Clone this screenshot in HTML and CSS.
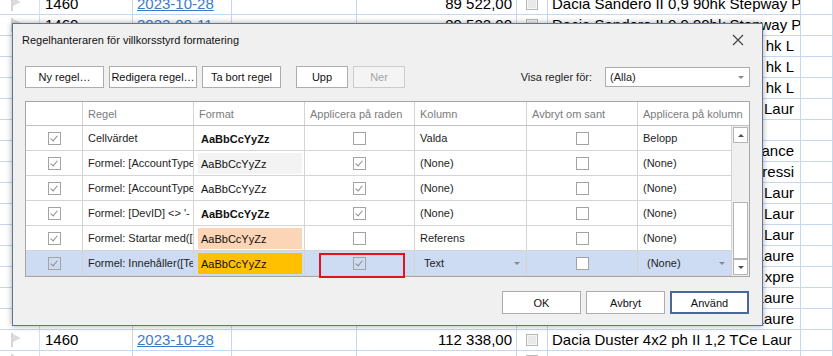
FILE: index.html
```html
<!DOCTYPE html>
<html lang="sv">
<head>
    <meta charset="UTF-8">
    <meta name="viewport" content="width=device-width, initial-scale=1.0">
    <title>Villkorsstyrd formatering</title>
    <link rel="stylesheet" href="styles.css">
</head>
<body>
    <!-- spreadsheet behind the dialog -->
    <div class="sheet">
        <div class="srow">
            <div class="c gut"><span class="flag"></span></div>
            <div class="c ca">1460</div>
            <div class="c cb"><a href="#">2023-10-28</a></div>
            <div class="c cc"></div>
            <div class="c cd">89 522,00</div>
            <div class="c ce"><span class="xbox"></span></div>
            <div class="c cf">Dacia Sandero II 0,9 90hk Stepway P</div>
            <div class="c cg"></div>
        </div>
        <div class="srow">
            <div class="c gut"><span class="flag"></span></div>
            <div class="c ca">1460</div>
            <div class="c cb"><a href="#">2023-09-11</a></div>
            <div class="c cc"></div>
            <div class="c cd">89 522,00</div>
            <div class="c ce"><span class="xbox"></span></div>
            <div class="c cf">Dacia Sandero II 0,9 90hk Stepway P</div>
            <div class="c cg"></div>
        </div>
        <!-- rows under the dialog: only the end of the model name shows -->
        <div class="srow"><div class="c gut"></div><div class="c ca"></div><div class="c cb"></div><div class="c cc"></div><div class="c cd"></div><div class="c ce"></div><div class="c cf tail">hk L</div><div class="c cg"></div></div>
        <div class="srow"><div class="c gut"></div><div class="c ca"></div><div class="c cb"></div><div class="c cc"></div><div class="c cd"></div><div class="c ce"></div><div class="c cf tail">hk L</div><div class="c cg"></div></div>
        <div class="srow"><div class="c gut"></div><div class="c ca"></div><div class="c cb"></div><div class="c cc"></div><div class="c cd"></div><div class="c ce"></div><div class="c cf tail">hk L</div><div class="c cg"></div></div>
        <div class="srow"><div class="c gut"></div><div class="c ca"></div><div class="c cb"></div><div class="c cc"></div><div class="c cd"></div><div class="c ce"></div><div class="c cf tail">Laur</div><div class="c cg"></div></div>
        <div class="srow"><div class="c gut"></div><div class="c ca"></div><div class="c cb"></div><div class="c cc"></div><div class="c cd"></div><div class="c ce"></div><div class="c cf tail"></div><div class="c cg"></div></div>
        <div class="srow"><div class="c gut"></div><div class="c ca"></div><div class="c cb"></div><div class="c cc"></div><div class="c cd"></div><div class="c ce"></div><div class="c cf tail">ance</div><div class="c cg"></div></div>
        <div class="srow"><div class="c gut"></div><div class="c ca"></div><div class="c cb"></div><div class="c cc"></div><div class="c cd"></div><div class="c ce"></div><div class="c cf tail">pressi</div><div class="c cg"></div></div>
        <div class="srow"><div class="c gut"></div><div class="c ca"></div><div class="c cb"></div><div class="c cc"></div><div class="c cd"></div><div class="c ce"></div><div class="c cf tail">Laur</div><div class="c cg"></div></div>
        <div class="srow"><div class="c gut"></div><div class="c ca"></div><div class="c cb"></div><div class="c cc"></div><div class="c cd"></div><div class="c ce"></div><div class="c cf tail">Laur</div><div class="c cg"></div></div>
        <div class="srow"><div class="c gut"></div><div class="c ca"></div><div class="c cb"></div><div class="c cc"></div><div class="c cd"></div><div class="c ce"></div><div class="c cf tail">Laur</div><div class="c cg"></div></div>
        <div class="srow"><div class="c gut"></div><div class="c ca"></div><div class="c cb"></div><div class="c cc"></div><div class="c cd"></div><div class="c ce"></div><div class="c cf tail">Laure</div><div class="c cg"></div></div>
        <div class="srow"><div class="c gut"></div><div class="c ca"></div><div class="c cb"></div><div class="c cc"></div><div class="c cd"></div><div class="c ce"></div><div class="c cf tail">xpre</div><div class="c cg"></div></div>
        <div class="srow"><div class="c gut"></div><div class="c ca"></div><div class="c cb"></div><div class="c cc"></div><div class="c cd"></div><div class="c ce"></div><div class="c cf tail">Laure</div><div class="c cg"></div></div>
        <div class="srow"><div class="c gut"></div><div class="c ca"></div><div class="c cb"></div><div class="c cc"></div><div class="c cd"></div><div class="c ce"></div><div class="c cf tail">Laure</div><div class="c cg"></div></div>
        <div class="srow">
            <div class="c gut"><span class="flag"></span></div>
            <div class="c ca">1460</div>
            <div class="c cb"><a href="#">2023-10-28</a></div>
            <div class="c cc"></div>
            <div class="c cd">112 338,00</div>
            <div class="c ce"><span class="xbox"></span></div>
            <div class="c cf">Dacia Duster 4x2 ph II 1,2 TCe Laur</div>
            <div class="c cg"></div>
        </div>
        <div class="srow">
            <div class="c gut"><span class="flag"></span></div>
            <div class="c ca"></div>
            <div class="c cb"></div>
            <div class="c cc"></div>
            <div class="c cd"></div>
            <div class="c ce"><span class="xbox"></span></div>
            <div class="c cf"></div>
            <div class="c cg"></div>
        </div>
    </div>

    <!-- the dialog window -->
    <div class="dialog">
        <div class="titlebar">
            <span>Regelhanteraren för villkorsstyrd formatering</span>
            <svg class="close" width="12" height="12" viewBox="0 0 12 12">
                <path d="M1 1 L11 11 M11 1 L1 11" stroke="#444" stroke-width="1.2" fill="none"/>
            </svg>
        </div>

        <div class="toolbar">
            <button class="btn">Ny regel…</button>
            <button class="btn wide">Redigera regel…</button>
            <button class="btn">Ta bort regel</button>
            <button class="btn small gap">Upp</button>
            <button class="btn small" disabled>Ner</button>
            <div class="showfor">
                <span>Visa regler för:</span>
                <div class="select">(Alla)<span class="arrow"></span></div>
            </div>
        </div>

        <div class="grid">
            <div class="ghead">
                <div class="gh"></div>
                <div class="gh">Regel</div>
                <div class="gh">Format</div>
                <div class="gh">Applicera på raden</div>
                <div class="gh">Kolumn</div>
                <div class="gh">Avbryt om sant</div>
                <div class="gh">Applicera på kolumn</div>
            </div>
            <div class="gbody">
                <div class="grows">
                    <div class="grow">
                        <div class="gc mid"><span class="chk on"></span></div>
                        <div class="gc">Cellvärdet</div>
                        <div class="gc fmt"><span class="swatch bold">AaBbCcYyZz</span></div>
                        <div class="gc mid"><span class="chk"></span></div>
                        <div class="gc">Valda</div>
                        <div class="gc mid"><span class="chk"></span></div>
                        <div class="gc">Belopp</div>
                    </div>
                    <div class="grow">
                        <div class="gc mid"><span class="chk on"></span></div>
                        <div class="gc">Formel: [AccountType</div>
                        <div class="gc fmt"><span class="swatch grey">AaBbCcYyZz</span></div>
                        <div class="gc mid"><span class="chk on"></span></div>
                        <div class="gc">(None)</div>
                        <div class="gc mid"><span class="chk"></span></div>
                        <div class="gc">(None)</div>
                    </div>
                    <div class="grow">
                        <div class="gc mid"><span class="chk on"></span></div>
                        <div class="gc">Formel: [AccountType</div>
                        <div class="gc fmt"><span class="swatch">AaBbCcYyZz</span></div>
                        <div class="gc mid"><span class="chk on"></span></div>
                        <div class="gc">(None)</div>
                        <div class="gc mid"><span class="chk"></span></div>
                        <div class="gc">(None)</div>
                    </div>
                    <div class="grow">
                        <div class="gc mid"><span class="chk on"></span></div>
                        <div class="gc">Formel: [DevID] &lt;&gt; '-</div>
                        <div class="gc fmt"><span class="swatch bold">AaBbCcYyZz</span></div>
                        <div class="gc mid"><span class="chk on"></span></div>
                        <div class="gc">(None)</div>
                        <div class="gc mid"><span class="chk"></span></div>
                        <div class="gc">(None)</div>
                    </div>
                    <div class="grow">
                        <div class="gc mid"><span class="chk on"></span></div>
                        <div class="gc">Formel: Startar med([</div>
                        <div class="gc fmt"><span class="swatch peach">AaBbCcYyZz</span></div>
                        <div class="gc mid"><span class="chk"></span></div>
                        <div class="gc">Referens</div>
                        <div class="gc mid"><span class="chk"></span></div>
                        <div class="gc">(None)</div>
                    </div>
                    <div class="grow selected">
                        <div class="gc mid"><span class="chk on"></span></div>
                        <div class="gc">Formel: Innehåller([Te</div>
                        <div class="gc fmt"><span class="swatch orange">AaBbCcYyZz</span></div>
                        <div class="gc mid"><span class="chk on"></span><span class="mark"></span></div>
                        <div class="gc edit">Text<span class="arrow"></span></div>
                        <div class="gc mid"><span class="chk white"></span></div>
                        <div class="gc edit">(None)<span class="arrow"></span></div>
                    </div>
                </div>
                <div class="vscroll">
                    <div class="sbtn"><span class="up"></span></div>
                    <div class="track"></div>
                    <div class="thumb"></div>
                    <div class="sbtn"><span class="down"></span></div>
                </div>
            </div>
        </div>

        <div class="footer">
            <button class="btn">OK</button>
            <button class="btn">Avbryt</button>
            <button class="btn default">Använd</button>
        </div>
    </div>
</body>
</html>
```

FILE: styles.css
```css
body{
    margin: 0;
    width: 833px;
    height: 356px;
    overflow: hidden;
    position: relative;
    background-color: white;
    font-family: "Liberation Sans", Arial, sans-serif;
}

/* spreadsheet */
.sheet{
    margin-top: -6px;
    font-size: 15px;
    color: black;
}
.srow{
    display: grid;
    grid-template-columns: 40px 93px 99px 125px 160px 31px 253px 1fr;
    height: 21px;
}
.c{
    box-sizing: border-box;
    border-right: 1px solid #c6d8ef;
    border-bottom: 1px solid #c6d8ef;
    line-height: 20px;
    white-space: nowrap;
    overflow: hidden;
}
.gut{
    border-right-color: #d4dff0;
    padding: 3px 0 0 11px;
}
.flag{
    display: block;
    width: 10px;
    height: 14px;
    border-left: 2px solid #d6d6d6;
    box-sizing: border-box;
    position: relative;
}
.flag::after{
    content: "";
    position: absolute;
    left: 0;
    top: 1px;
    border-left: 8px solid #dcdcdc;
    border-top: 4px solid transparent;
    border-bottom: 4px solid transparent;
}
.ca{
    padding-left: 5px;
}
.cb{
    padding-left: 4px;
}
.cb a{
    color: #3b7bc6;
}
.cd{
    text-align: right;
    padding-right: 4px;
}
.ce{
    padding: 4px 0 0 9px;
}
.xbox{
    display: block;
    width: 12px;
    height: 12px;
    box-sizing: border-box;
    border: 1px solid #b8b8b8;
    background-color: #e9e9e9;
    box-shadow: inset 0 0 0 1px #f6f6f6;
}
.cf{
    padding-left: 4px;
}
.cf.tail{
    text-align: right;
    padding-right: 6px;
}

/* dialog */
.dialog{
    position: absolute;
    left: 12px;
    top: 23px;
    width: 751px;
    height: 303px;
    box-sizing: border-box;
    border: 1px solid #5d7597;
    background-color: #f0f0f0;
    box-shadow: 0 0 6px rgba(0, 0, 0, 0.35);
    padding: 0 12px;
    font-size: 11px;
    color: #1e1e1e;
}
.titlebar{
    height: 31px;
    margin: 0 -12px;
    padding: 0 18px 0 9px;
    display: flex;
    align-items: center;
    justify-content: space-between;
    font-size: 11px;
    color: #111;
}
.toolbar{
    margin-top: 11px;
    height: 22px;
    display: flex;
    align-items: center;
    gap: 5px;
}
.btn{
    height: 22px;
    width: 79px;
    padding: 0;
    background-color: white;
    border: 1px solid #adadad;
    font-family: "Liberation Sans", Arial, sans-serif;
    font-size: 11px;
    color: #111;
}
.btn.wide{
    width: 88px;
}
.btn.small{
    width: 52px;
}
.btn.gap{
    margin-left: 10px;
}
.btn:disabled{
    background-color: #f4f4f4;
    border-color: #cccccc;
    color: #a3a3a3;
}
.showfor{
    margin-left: auto;
    display: flex;
    align-items: center;
    gap: 13px;
}
.select{
    width: 145px;
    height: 20px;
    box-sizing: border-box;
    border: 1px solid #adadad;
    background-color: white;
    padding: 0 0 0 4px;
    display: flex;
    align-items: center;
    justify-content: space-between;
}
.arrow{
    width: 0;
    height: 0;
    border-left: 3px solid transparent;
    border-right: 3px solid transparent;
    border-top: 3px solid #8a8a8a;
    margin-right: 5px;
}

/* rules table */
.grid{
    margin-top: 13px;
    border: 1px solid #a6a6a6;
    background-color: white;
}
.ghead{
    display: grid;
    grid-template-columns: 57px 111px 111px 110px 112px 111px 1fr;
    height: 24px;
    border-bottom: 1px solid #c2c2c2;
    box-sizing: border-box;
}
.gh{
    border-right: 1px solid #d4d4d4;
    padding-left: 5px;
    display: flex;
    align-items: center;
    color: #7c7c7c;
    white-space: nowrap;
    overflow: hidden;
}
.gh:last-child{
    border-right: none;
}
.gbody{
    display: flex;
    height: 150px;
}
.grows{
    width: 706px;
}
.grow{
    display: grid;
    grid-template-columns: 57px 111px 111px 110px 112px 111px 94px;
    height: 25px;
}
.grow.selected{
    background-color: #cddbf3;
}
.gc{
    box-sizing: border-box;
    border-right: 1px solid #d4d4d4;
    border-bottom: 1px solid #d4d4d4;
    padding-left: 5px;
    display: flex;
    align-items: center;
    white-space: nowrap;
    overflow: hidden;
    position: relative;
}
.gc.mid{
    justify-content: center;
    padding-left: 0;
    overflow: visible;
}
.gc.fmt{
    padding: 2px 2px 1px 4px;
    align-items: stretch;
}
.gc.edit{
    padding-left: 9px;
    justify-content: space-between;
}
.gc.edit .arrow{
    margin-right: 6px;
}
.swatch{
    flex: 1;
    padding-left: 3px;
    display: flex;
    align-items: center;
    font-size: 11px;
    color: #111;
}
.swatch.bold{
    font-weight: bold;
}
.swatch.grey{
    background-color: #f3f3f3;
}
.swatch.peach{
    background-color: #fbd5b5;
}
.swatch.orange{
    background-color: #ffc000;
}
.chk{
    width: 13px;
    height: 13px;
    box-sizing: border-box;
    border: 1px solid #a3a3a3;
    position: relative;
}
.chk.white{
    background-color: white;
}
.chk.on::after{
    content: "";
    position: absolute;
    left: 3px;
    top: 1px;
    width: 3px;
    height: 6px;
    border: solid #8c8c8c;
    border-width: 0 1px 1px 0;
    transform: rotate(40deg);
}
.mark{
    position: absolute;
    left: 14px;
    top: 2px;
    width: 86px;
    height: 25px;
    box-sizing: border-box;
    border: 2px solid #e8101c;
}

/* scrollbar */
.vscroll{
    width: 17px;
    box-sizing: border-box;
    padding: 1px 1px 1px 1px;
    display: flex;
    flex-direction: column;
    background-color: #f0f0f0;
}
.sbtn{
    height: 16px;
    box-sizing: border-box;
    border: 1px solid #b4b4b4;
    background-color: white;
    display: flex;
    align-items: center;
    justify-content: center;
}
.up, .down{
    width: 0;
    height: 0;
    border-left: 3px solid transparent;
    border-right: 3px solid transparent;
}
.up{
    border-bottom: 3px solid #505050;
}
.down{
    border-top: 3px solid #505050;
}
.track{
    flex: 1;
}
.thumb{
    height: 57px;
    box-sizing: border-box;
    border: 1px solid #b4b4b4;
    background-color: white;
}

/* footer buttons */
.footer{
    margin-top: 14px;
    display: flex;
    justify-content: flex-end;
    gap: 5px;
    padding-right: 1px;
}
.footer .btn{
    height: 23px;
}
.btn.default{
    border: 2px solid #4a6796;
}
```
